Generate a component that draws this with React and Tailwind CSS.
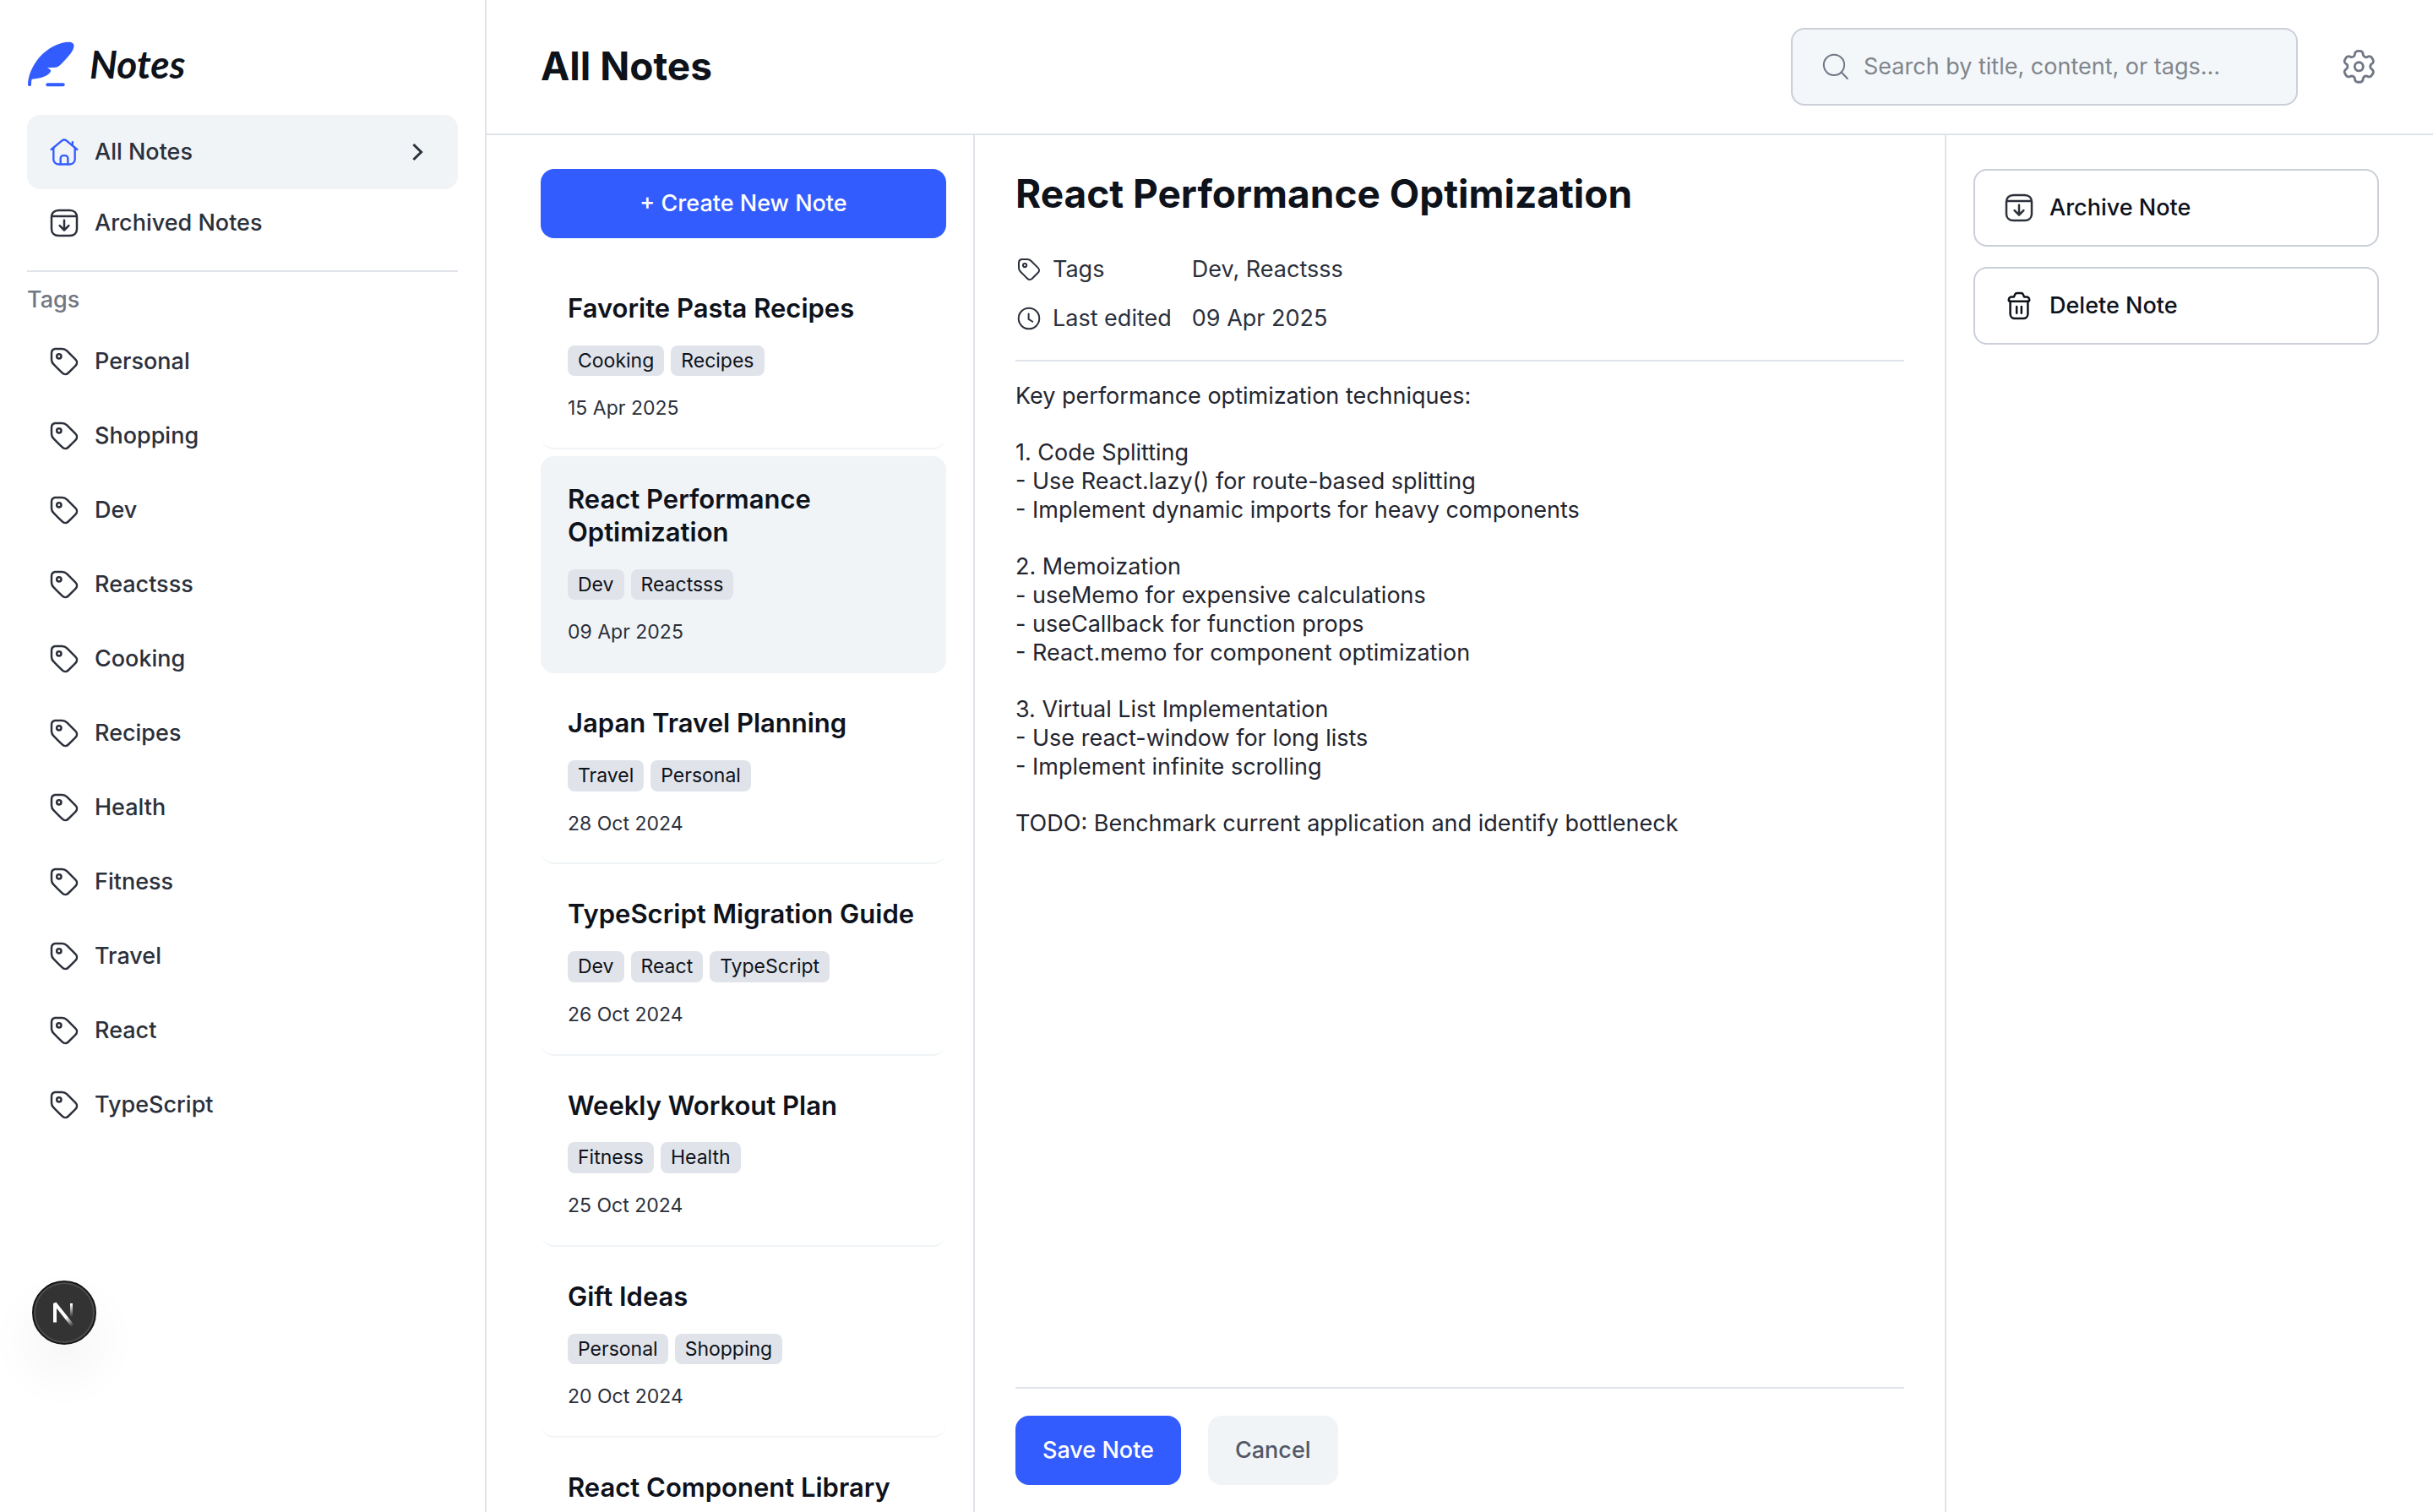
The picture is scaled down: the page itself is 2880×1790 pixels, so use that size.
import React from "react";

const TAGS = [
  "Personal",
  "Shopping",
  "Dev",
  "Reactsss",
  "Cooking",
  "Recipes",
  "Health",
  "Fitness",
  "Travel",
  "React",
  "TypeScript",
];

const NOTES = [
  { title: "Favorite Pasta Recipes", tags: ["Cooking", "Recipes"], date: "15 Apr 2025" },
  { title: "React Performance Optimization", tags: ["Dev", "Reactsss"], date: "09 Apr 2025", active: true },
  { title: "Japan Travel Planning", tags: ["Travel", "Personal"], date: "28 Oct 2024" },
  { title: "TypeScript Migration Guide", tags: ["Dev", "React", "TypeScript"], date: "26 Oct 2024" },
  { title: "Weekly Workout Plan", tags: ["Fitness", "Health"], date: "25 Oct 2024" },
  { title: "Gift Ideas", tags: ["Personal", "Shopping"], date: "20 Oct 2024" },
  { title: "React Component Library", tags: [], date: "" },
];

const NOTE_BODY = `Key performance optimization techniques:

1. Code Splitting
- Use React.lazy() for route-based splitting
- Implement dynamic imports for heavy components

2. Memoization
- useMemo for expensive calculations
- useCallback for function props
- React.memo for component optimization

3. Virtual List Implementation
- Use react-window for long lists
- Implement infinite scrolling

TODO: Benchmark current application and identify bottleneck`;

function Icon({ className, strokeWidth = 1.5, children }) {
  return (
    <svg
      viewBox="0 0 24 24"
      fill="none"
      stroke="currentColor"
      strokeWidth={strokeWidth}
      strokeLinecap="round"
      strokeLinejoin="round"
      className={className}
      aria-hidden="true"
    >
      {children}
    </svg>
  );
}

function HomeIcon({ className }) {
  return (
    <Icon className={className} strokeWidth={1.4}>
      <path d="M2.8 10.2 10.3 4a2.7 2.7 0 0 1 3.4 0l7.5 6.2" />
      <path d="M4.4 9v8.2a3.5 3.5 0 0 0 3.5 3.5h8.2a3.5 3.5 0 0 0 3.5-3.5V9" />
      <path d="M17.9 7.3V4.9" />
      <path d="M9.4 20.6v-4.1a2 2 0 0 1 2-2h1.2a2 2 0 0 1 2 2v4.1" />
    </Icon>
  );
}

function ArchiveIcon({ className }) {
  return (
    <Icon className={className}>
      <path d="M21 7.8v8.4c0 2.9-2 4.8-5 4.8H8c-3 0-5-1.9-5-4.8V7.8C3 4.9 5 3 8 3h8c3 0 5 1.9 5 4.8Z" />
      <path d="M3.3 7.2h17.4" />
      <path d="M12 10v7M8.8 13.9 12 17.1l3.2-3.2" />
    </Icon>
  );
}

function TagIcon({ className }) {
  return (
    <Icon className={className}>
      <path d="M3.016 5.966c.003-1.411 1.07-2.677 2.456-2.916.284-.05 3.616-.042 4.995-.041 1.364 0 2.527.491 3.49 1.452 2.045 2.042 4.088 4.085 6.128 6.13 1.208 1.21 1.224 3.066.022 4.28a805.496 805.496 0 0 1-5.229 5.228c-1.212 1.201-3.069 1.186-4.279-.022-2.064-2.058-4.127-4.115-6.182-6.182-.795-.8-1.264-1.766-1.368-2.895-.084-.903-.035-4.26-.033-5.034Z" />
      <circle cx="8.3" cy="8.3" r="1.6" />
    </Icon>
  );
}

function ClockIcon({ className }) {
  return (
    <Icon className={className}>
      <circle cx="12" cy="12" r="9.2" />
      <path d="M11.7 7.8v4.9l3.5 2.1" />
    </Icon>
  );
}

function TrashIcon({ className }) {
  return (
    <Icon className={className}>
      <path d="m14.852 3.879.818 1.785h1.64c1.102 0 1.996.894 1.996 1.996v.393a.84.84 0 0 1-.84.841H5.535a.84.84 0 0 1-.841-.84V7.66c0-1.102.893-1.996 1.996-1.996H8.33l.818-1.785a1.5 1.5 0 0 1 1.363-.875h2.978a1.5 1.5 0 0 1 1.363.875Z" />
      <path d="M18.24 8.894v8.964a3.167 3.167 0 0 1-3.166 3.166H8.926a3.167 3.167 0 0 1-3.165-3.166V8.894" />
      <path d="M10.3 12.6v4.7M13.7 12.6v4.7" />
    </Icon>
  );
}

function SettingsIcon({ className }) {
  return (
    <Icon className={className}>
      <path d="M20.806 7.624l-.622-1.08a1.913 1.913 0 0 0-2.609-.705 1.904 1.904 0 0 1-2.608-.678 1.83 1.83 0 0 1-.257-.915 1.913 1.913 0 0 0-1.913-1.968h-1.254a1.904 1.904 0 0 0-1.904 1.913 1.913 1.913 0 0 1-1.913 1.886 1.83 1.83 0 0 1-.915-.257 1.913 1.913 0 0 0-2.609.705l-.668 1.099a1.913 1.913 0 0 0 .696 2.608 1.913 1.913 0 0 1 0 3.314 1.904 1.904 0 0 0-.696 2.6l.632 1.089a1.913 1.913 0 0 0 2.608.741 1.895 1.895 0 0 1 2.6.696c.164.277.253.593.256.915 0 1.057.857 1.913 1.913 1.913h1.254a1.913 1.913 0 0 0 1.913-1.904 1.904 1.904 0 0 1 1.913-1.913c.322.009.636.097.916.256a1.913 1.913 0 0 0 2.608-.695l.659-1.099a1.904 1.904 0 0 0-.695-2.608 1.904 1.904 0 0 1-.696-2.609c.166-.29.406-.53.696-.696a1.913 1.913 0 0 0 .695-2.6Z" />
      <circle cx="12.175" cy="11.889" r="2.636" />
    </Icon>
  );
}

function SearchIcon({ className }) {
  return (
    <Icon className={className} strokeWidth={1.2}>
      <circle cx="10.2" cy="10.7" r="7.3" />
      <path d="m15.4 15.9 4.3 4.5" />
    </Icon>
  );
}

function ChevronIcon({ className }) {
  return (
    <Icon className={className}>
      <path strokeLinecap="butt" strokeLinejoin="miter" d="m9.7 7.5 4.6 4.5-4.6 4.5" />
    </Icon>
  );
}

function FeatherLogo({ className }) {
  return (
    <svg viewBox="18 24 174 168" className={className} aria-hidden="true">
      <path
        fill="#335CFF"
        d="M21 181C21 150 36 114 62 83C92 49 135 29 166 29C180 29 187 36 184 48C180 66 158 88 142 105C130 117 126 120 108 120L90 121C98 125 101 128 103 132C95 148 72 159 35 161C33 168 33 174 33 181C33 188 21 188 21 181Z"
      />
      <rect x="85" y="175" width="67" height="12" rx="6" fill="#335CFF" />
    </svg>
  );
}

function NextBadge() {
  return (
    <button
      type="button"
      aria-label="Open Next.js Dev Tools"
      className="fixed bottom-[198px] left-[38px] flex size-[76px] items-center justify-center rounded-full border-2 border-[#171717] bg-[#333333] shadow-[inset_0_0_0_2px_#4d4d4d,0_32px_64px_rgba(0,0,0,0.06)]"
    >
      <svg viewBox="0 0 76 76" className="size-[76px] shrink-0" fill="none" aria-hidden="true">
        <defs>
          <linearGradient id="diagonalFade" gradientUnits="userSpaceOnUse" x1="41" y1="43" x2="49" y2="53">
            <stop stopColor="#fff" />
            <stop offset="1" stopColor="#fff" stopOpacity="0" />
          </linearGradient>
          <linearGradient id="stemFade" gradientUnits="userSpaceOnUse" x1="47" y1="28" x2="47" y2="43">
            <stop stopColor="#fff" />
            <stop offset="1" stopColor="#fff" stopOpacity="0" />
          </linearGradient>
        </defs>
        <path d="M27 49.5V27L48 53.5" stroke="url(#diagonalFade)" strokeWidth="4" strokeLinejoin="bevel" />
        <rect x="45" y="27" width="3" height="16" fill="url(#stemFade)" />
      </svg>
    </button>
  );
}

function Sidebar() {
  return (
    <aside className="flex w-[576px] shrink-0 flex-col border-r-2 border-[#E0E4EA] px-8 pt-12">
      <a href="#home" className="flex items-center gap-4">
        <FeatherLogo className="h-14 w-[58px]" />
        <span className="font-['Lato'] text-[46px] leading-[56px] font-bold text-[#0E121B] italic">Notes</span>
      </a>
      <nav className="mt-8 flex flex-col text-[27px] leading-tight font-medium text-[#2B303B]">
        <a href="#all" className="flex items-center gap-4 rounded-2xl bg-[#F0F4F7] px-6 py-5">
          <HomeIcon className="size-10 text-[#335CFF]" />
          <span className="flex-1">All Notes</span>
          <ChevronIcon className="size-12" />
        </a>
        <a href="#archived" className="flex items-center gap-4 rounded-2xl px-6 py-5">
          <ArchiveIcon className="size-10" />
          <span>Archived Notes</span>
        </a>
        <h2 className="mt-4 border-t-2 border-[#E0E4EA] py-4 text-[#717784]">Tags</h2>
        <ul className="flex flex-col gap-2">
          {TAGS.map((tag) => (
            <li key={tag}>
              <a href={`#tag-${tag}`} className="flex items-center gap-4 rounded-2xl px-6 py-5">
                <TagIcon className="size-10" />
                <span>{tag}</span>
              </a>
            </li>
          ))}
        </ul>
      </nav>
    </aside>
  );
}

function Header() {
  return (
    <header className="flex h-40 shrink-0 items-center justify-between border-b-2 border-[#E0E4EA] px-16">
      <h1 className="text-[46px] leading-tight font-bold text-[#0E121B]">All Notes</h1>
      <div className="flex items-center gap-12">
        <label className="flex w-[600px] items-center gap-3 rounded-2xl border-2 border-[#CACFD8] bg-[#F3F7FA] px-8 py-6">
          <SearchIcon className="size-10 shrink-0 text-[#717784]" />
          <input
            type="search"
            aria-label="Search notes"
            placeholder="Search by title, content, or tags…"
            className="w-full min-w-0 bg-transparent text-[27px] leading-10 text-[#0E121B] outline-none placeholder:text-[#81858B]"
          />
        </label>
        <button type="button" aria-label="Settings" className="p-px">
          <SettingsIcon className="size-[46px] text-[#717784]" />
        </button>
      </div>
    </header>
  );
}

function NoteCard({ note }) {
  return (
    <li>
      <button
        type="button"
        className={
          note.active
            ? "flex w-full flex-col items-start gap-6 rounded-2xl border-b-2 border-[#F0F4F7] bg-[#F0F4F7] p-8 text-left"
            : "flex w-full flex-col items-start gap-6 rounded-2xl border-b-2 border-[#F0F4F7] p-8 text-left"
        }
      >
        <span className="text-[31px] leading-tight font-semibold text-[#0E121B]">{note.title}</span>
        <span className="flex gap-2">
          {note.tags.map((tag) => (
            <span key={tag} className="rounded-lg bg-[#E0E4EA] px-3 py-1 text-[23px] leading-tight text-[#0E121B]">
              {tag}
            </span>
          ))}
        </span>
        <span className="text-[23px] leading-tight text-[#2B303B]">{note.date}</span>
      </button>
    </li>
  );
}

function NoteList() {
  return (
    <section className="flex w-[578px] shrink-0 flex-col gap-8 overflow-hidden border-r-2 border-[#E0E4EA] pt-10 pr-8 pl-16">
      <button
        type="button"
        className="shrink-0 rounded-2xl bg-[#335CFF] py-6 text-[27px] leading-tight font-medium text-white"
      >
        + Create New Note
      </button>
      <ul className="flex flex-col gap-2">
        {NOTES.map((note) => (
          <NoteCard key={note.title} note={note} />
        ))}
      </ul>
    </section>
  );
}

function Editor() {
  return (
    <form className="flex min-w-0 flex-1 flex-col border-r-2 border-[#E0E4EA] px-12 pt-10 pb-8 text-[27px] leading-tight text-[#2B303B]">
      <input
        aria-label="Title"
        defaultValue="React Performance Optimization"
        className="w-full text-[46px] leading-[58px] font-bold text-[#0E121B] outline-none"
      />
      <div className="grid grid-cols-[auto_1fr] gap-6 border-b-2 border-[#E0E4EA] pt-11 pb-8">
        <label htmlFor="note-tags" className="flex items-center gap-3">
          <TagIcon className="size-8" />
          Tags
        </label>
        <input id="note-tags" defaultValue="Dev, Reactsss" className="w-full leading-[34px] outline-none" />
        <span className="flex items-center gap-3">
          <ClockIcon className="size-8" />
          Last edited
        </span>
        <span>09 Apr 2025</span>
      </div>
      <textarea
        aria-label="Note content"
        defaultValue={NOTE_BODY}
        className="mt-6 w-full flex-1 resize-none leading-tight text-[#232530] outline-none"
      />
      <div className="flex gap-8 border-t-2 border-[#E0E4EA] pt-8 font-medium">
        <button type="submit" className="rounded-2xl bg-[#335CFF] px-8 py-6 text-white">
          Save Note
        </button>
        <button type="button" className="rounded-2xl bg-[#F0F4F7] px-8 py-6 text-[#525866]">
          Cancel
        </button>
      </div>
    </form>
  );
}

function Actions() {
  return (
    <section className="flex w-[576px] shrink-0 flex-col gap-6 pt-10 pr-16 pl-8 text-[27px] leading-tight font-medium text-[#0E121B]">
      <button type="button" className="flex items-center gap-4 rounded-2xl border-2 border-[#CACFD8] px-8 py-6">
        <ArchiveIcon className="size-10 text-[#2B303B]" />
        Archive Note
      </button>
      <button type="button" className="flex items-center gap-4 rounded-2xl border-2 border-[#CACFD8] px-8 py-6">
        <TrashIcon className="size-10" />
        Delete Note
      </button>
    </section>
  );
}

export default function App() {
  return (
    <div className="flex h-screen overflow-hidden bg-white font-['Inter',sans-serif]">
      <Sidebar />
      <main className="flex min-w-0 flex-1 flex-col">
        <Header />
        <div className="flex min-h-0 flex-1">
          <NoteList />
          <Editor />
          <Actions />
        </div>
      </main>
      <NextBadge />
    </div>
  );
}
